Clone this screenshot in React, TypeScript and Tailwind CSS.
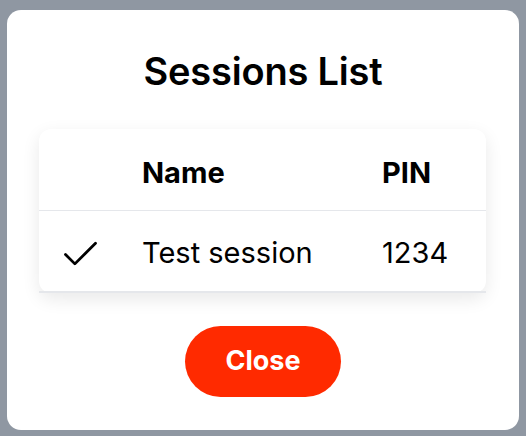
import { Check } from 'lucide-react';

const sessions = [{ name: 'Test session', pin: '1234', active: true }];

export default function App() {
    return (
        <div className="min-h-screen w-full bg-[#8f97a2] px-[7px] pt-[10px] pb-[6px] font-['Inter',sans-serif] text-black">
            <div className="flex flex-col items-center rounded-[14px] bg-white pt-[36px] pb-[33px]">
                <h1 className="h-[50px] text-[38px] font-semibold leading-[50px] tracking-[-0.2px]">Sessions List</h1>

                <div className="mt-[33px] w-[447px] self-start ml-[32px] rounded-xl bg-white shadow-[0_6px_18px_rgba(0,0,0,0.09)]">
                    <div className="grid h-[82px] grid-cols-[103px_240px_1fr] items-center border-b border-[#e5e7eb] pt-[6px] text-[29px] font-bold">
                        <div />
                        <div>Name</div>
                        <div>PIN</div>
                    </div>
                    {sessions.map(s => (
                        <div
                            key={s.pin}
                            className="grid h-[82px] grid-cols-[103px_240px_1fr] items-center border-b-2 border-[#e5e7eb] pt-[4px] text-[29px]"
                        >
                            <div className="pl-[19px] pt-[2px]">
                                {s.active && <Check size={45} strokeWidth={1.5} />}
                            </div>
                            <div>{s.name}</div>
                            <div>{s.pin}</div>
                        </div>
                    ))}
                </div>

                <button className="mt-[33px] h-[71px] w-[156px] rounded-full bg-[#ff2a00] text-[27px] font-bold text-white">
                    Close
                </button>
            </div>
        </div>
    );
}
